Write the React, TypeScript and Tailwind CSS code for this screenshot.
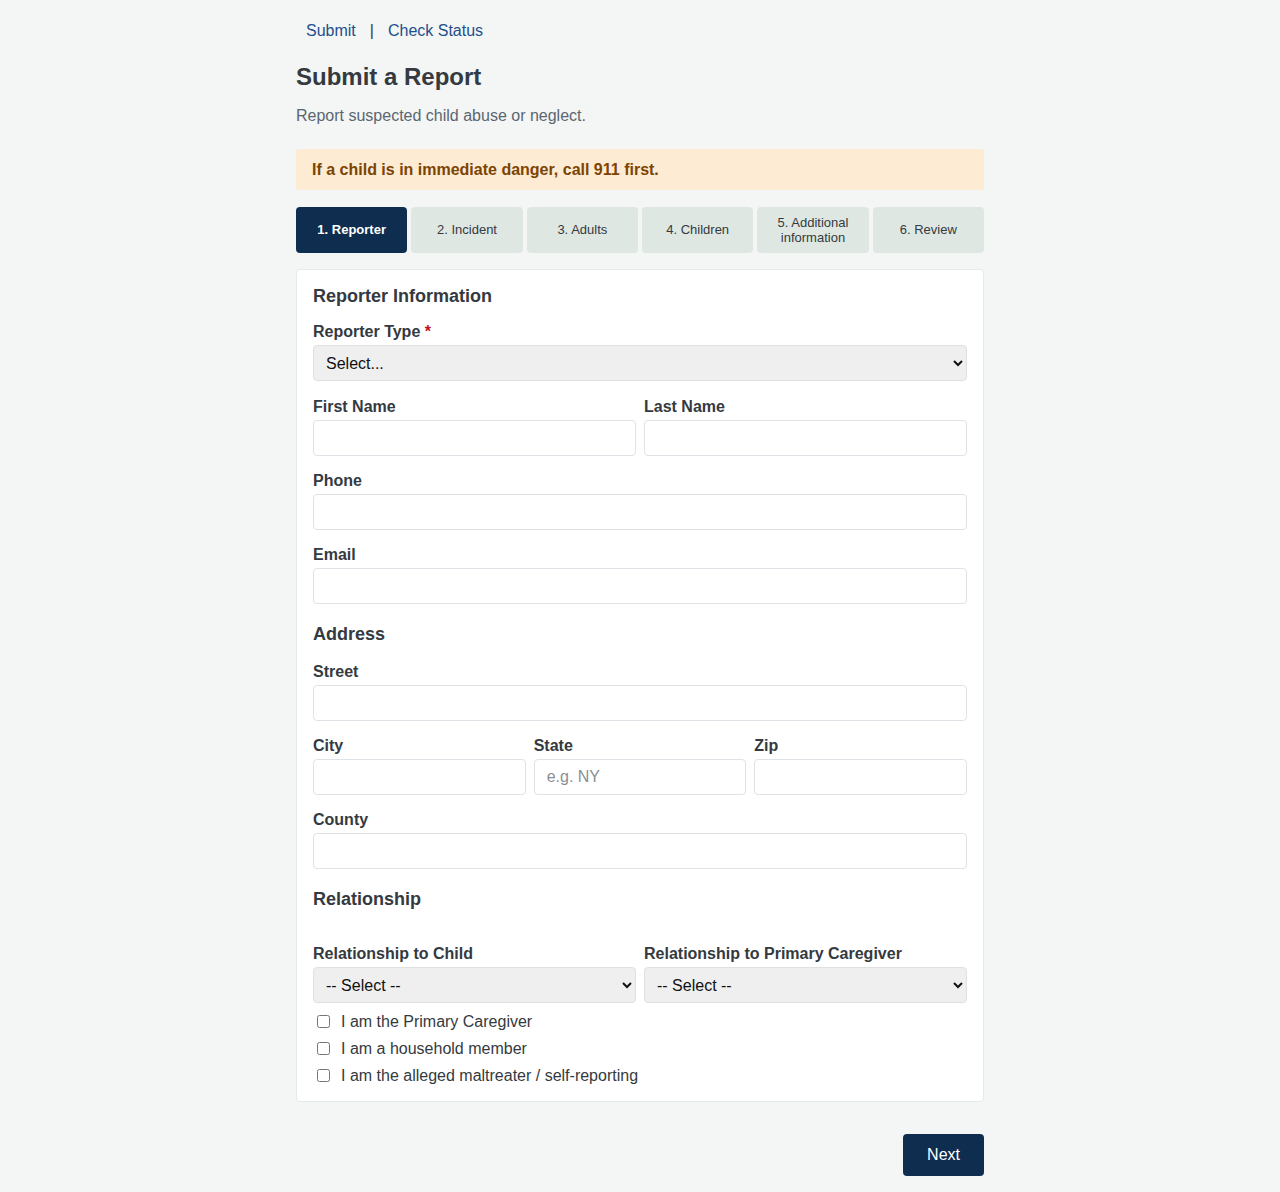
import { useState } from 'react';

const steps = ['1. Reporter', '2. Incident', '3. Adults', '4. Children', '5. Additional information', '6. Review'];

const inputCls =
    'block w-full h-9 rounded-[4px] border border-[#dfe2e6] bg-white px-3 text-base text-[#212529] placeholder:text-[#8a8f95] outline-none';
const selectCls =
    'block w-full h-9 rounded-[4px] border border-[#e0e0e0] bg-[#efefef] px-2 text-base text-[#111] outline-none';
const labelCls = 'block text-base font-bold leading-5 text-[#343a40] mb-[3px]';

function Field({
    label,
    required,
    className = 'mb-[15px]',
    children,
}: {
    label: string;
    required?: boolean;
    className?: string;
    children: React.ReactNode;
}) {
    return (
        <div className={className}>
            <label className={labelCls}>
                {label}
                {required && <span className="text-[#c0141c]"> *</span>}
            </label>
            {children}
        </div>
    );
}

export default function App() {
    const [active] = useState(0);

    return (
        <div className="min-h-[1192px] bg-[#f3f6f5] font-['Liberation_Sans',Arial,sans-serif] text-[#343a40]">
            <div className="mx-auto w-[688px] pt-[21px] pb-4">
                {/* Top nav */}
                <nav className="flex items-center pl-[10px] text-base leading-5 text-[#1f4e8c]">
                    <a href="#">Submit</a>
                    <span className="mx-[14px] text-[#343a40]">|</span>
                    <a href="#">Check Status</a>
                </nav>

                {/* Header */}
                <h1 className="mt-[21px] text-2xl font-bold leading-[30px] text-[#343a40]">Submit a Report</h1>
                <p className="mt-[14px] text-base leading-5 text-[#5b6670]">Report suspected child abuse or neglect.</p>

                {/* Danger notice */}
                <div className="mt-[23px] flex h-[41px] items-center rounded-[3px] bg-[#fdebd3] px-4 text-base font-bold text-[#7c4403]">
                    If a child is in immediate danger, call 911 first.
                </div>

                {/* Steps */}
                <div className="mt-[17px] grid grid-cols-6 gap-1">
                    {steps.map((step, i) => (
                        <button
                            key={step}
                            type="button"
                            className={`flex h-[46px] items-center justify-center rounded-[4px] px-2 pb-px text-center text-[13px] leading-[15px] ${
                                i === active ? 'bg-[#0f2d4f] font-bold text-white' : 'bg-[#dfe7e3] text-[#343a40]'
                            }`}
                        >
                            {step === '5. Additional information' ? (
                                <span>
                                    5. Additional
                                    <br />
                                    information
                                </span>
                            ) : (
                                step
                            )}
                        </button>
                    ))}
                </div>

                {/* Form card */}
                <div className="mt-4 rounded-[4px] border border-[#e6eae9] bg-white px-4 pt-[17px] pb-[12px]">
                    <h2 className="mb-[17px] text-lg font-bold leading-[18px]">Reporter Information</h2>

                    <Field label="Reporter Type" required className="mb-[16px]">
                        <select className={selectCls} defaultValue="">
                            <option value="">Select...</option>
                        </select>
                    </Field>

                    <div className="grid grid-cols-2 gap-x-2">
                        <Field label="First Name">
                            <input className={inputCls} />
                        </Field>
                        <Field label="Last Name">
                            <input className={inputCls} />
                        </Field>
                    </div>

                    <Field label="Phone">
                        <input className={inputCls} />
                    </Field>
                    <Field label="Email">
                        <input className={inputCls} />
                    </Field>

                    <h2 className="mt-[21px] mb-[19px] text-lg font-bold leading-[18px]">Address</h2>

                    <Field label="Street">
                        <input className={inputCls} />
                    </Field>

                    <div className="grid grid-cols-3 gap-x-2">
                        <Field label="City">
                            <input className={inputCls} />
                        </Field>
                        <Field label="State">
                            <input className={inputCls} placeholder="e.g. NY" />
                        </Field>
                        <Field label="Zip">
                            <input className={inputCls} />
                        </Field>
                    </div>

                    <Field label="County">
                        <input className={inputCls} />
                    </Field>

                    <h2 className="mt-[21px] mb-[36px] text-lg font-bold leading-[18px]">Relationship</h2>

                    <div className="grid grid-cols-2 gap-x-2">
                        <div>
                            <label className={labelCls}>Relationship to Child</label>
                            <select className={selectCls} defaultValue="">
                                <option value="">-- Select --</option>
                            </select>
                        </div>
                        <div>
                            <label className={labelCls}>Relationship to Primary Caregiver</label>
                            <select className={selectCls} defaultValue="">
                                <option value="">-- Select --</option>
                            </select>
                        </div>
                    </div>

                    <div className="mt-[5px]">
                        {[
                            'I am the Primary Caregiver',
                            'I am a household member',
                            'I am the alleged maltreater / self-reporting',
                        ].map((text) => (
                            <label key={text} className="flex h-[27px] items-center text-base text-[#343a40]">
                                <input type="checkbox" className="ml-1 mr-[11px] h-[13px] w-[13px]" />
                                {text}
                            </label>
                        ))}
                    </div>
                </div>

                {/* Footer */}
                <div className="mt-[32px] flex justify-end">
                    <button type="button" className="h-[42px] rounded-[4px] bg-[#0f2d4f] px-6 text-base text-white">
                        Next
                    </button>
                </div>
            </div>
        </div>
    );
}
